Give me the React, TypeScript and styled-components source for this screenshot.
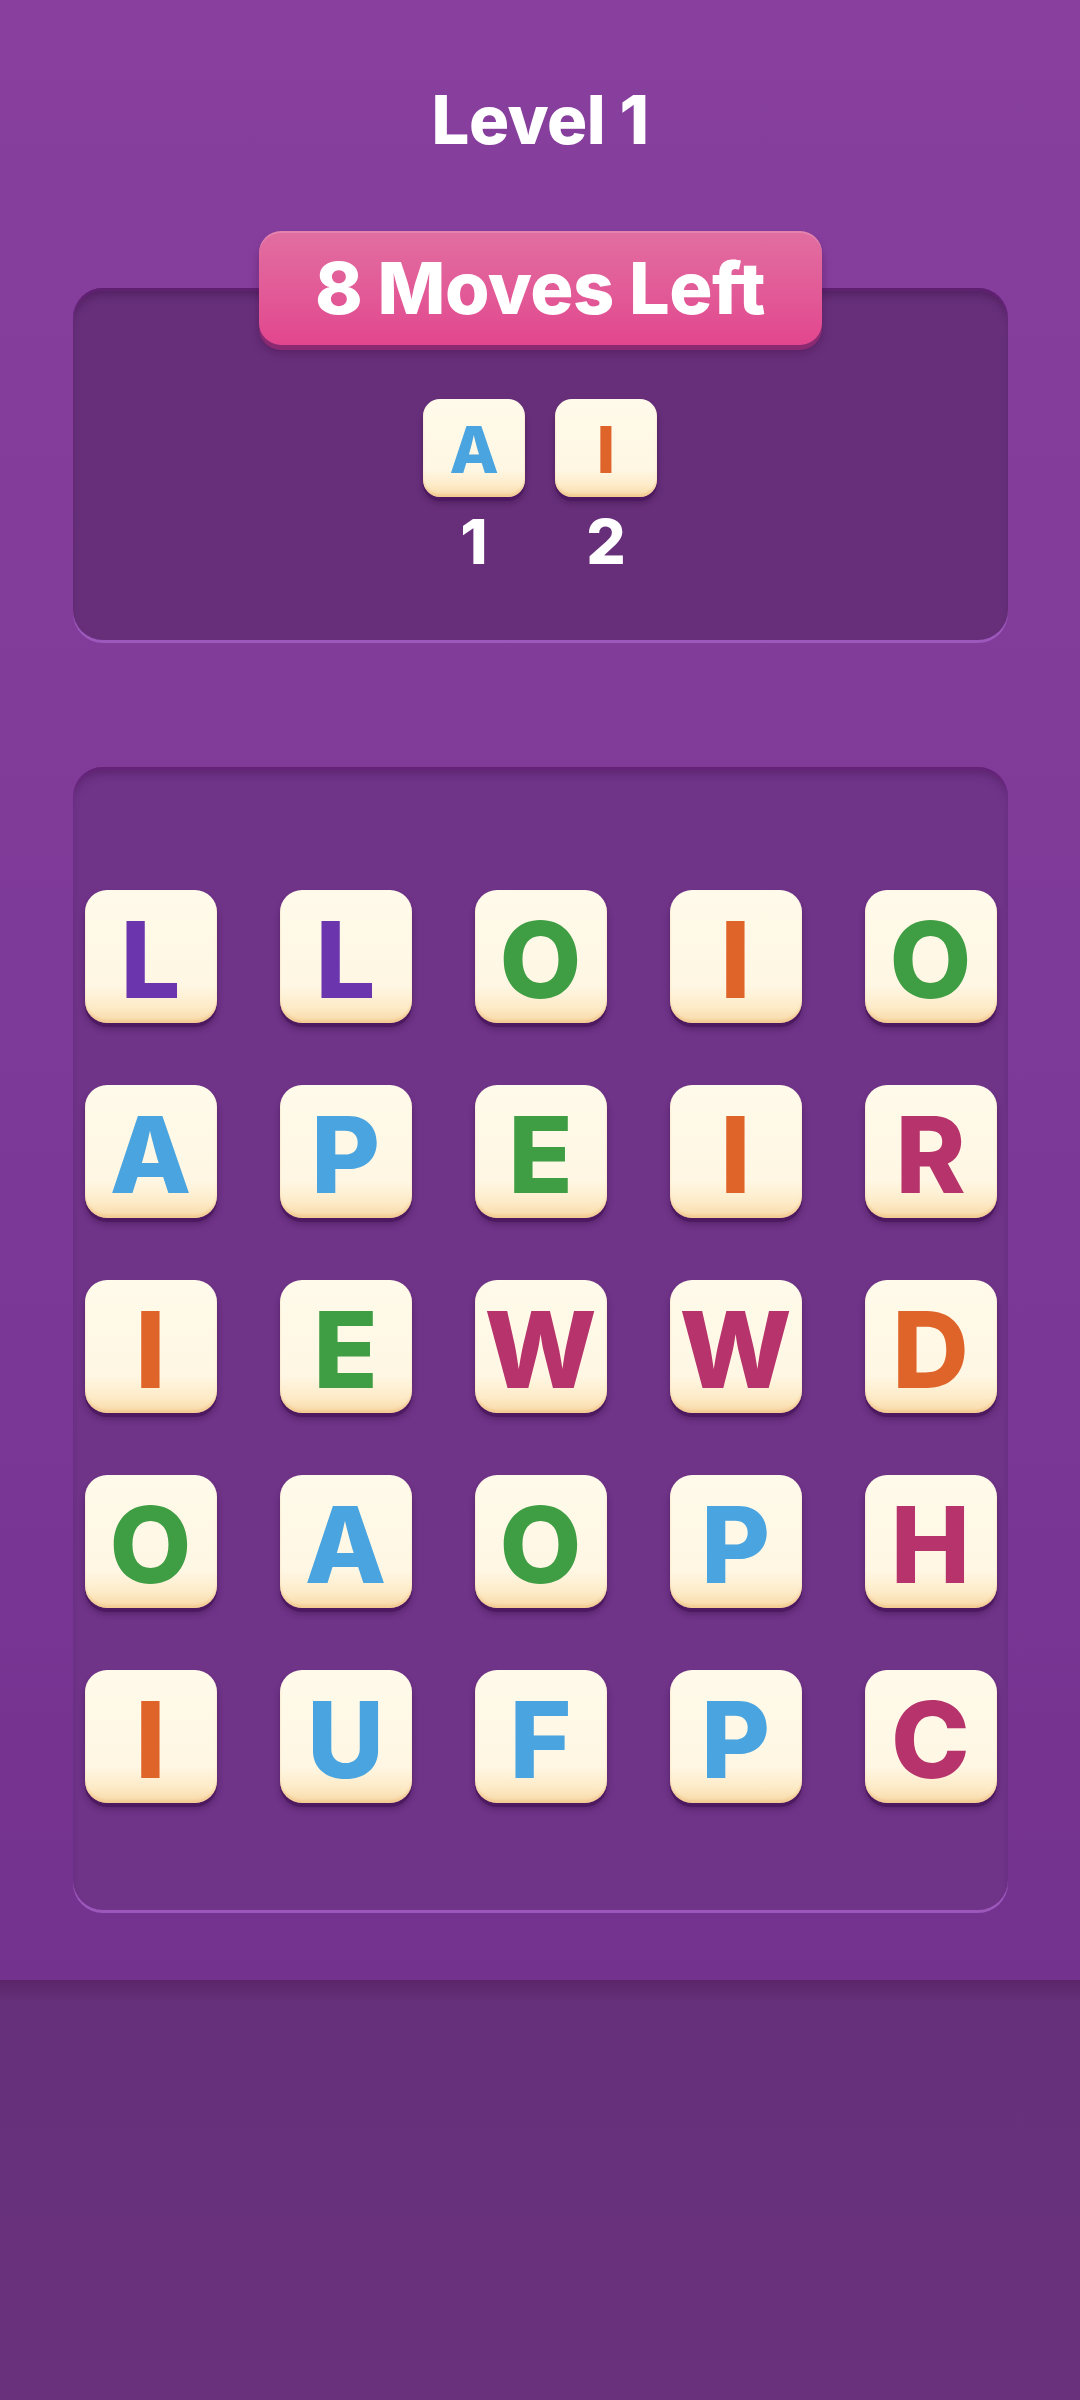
import React from 'react'
import styled, { createGlobalStyle } from 'styled-components'

const GlobalStyle = createGlobalStyle`
  html, body {
    margin: 0;
    padding: 0;
    background: #69317c;
  }
  * {
    box-sizing: border-box;
  }
`

const colors = {
  purple: '#6b35ae',
  green: '#3f9d44',
  orange: '#df6429',
  blue: '#4aa4df',
  pink: '#b7336b',
}

type LetterColor = keyof typeof colors

const Screen = styled.div`
  width: 1080px;
  height: 2400px;
  display: flex;
  flex-direction: column;
  font-family: 'Inter', 'Lato', sans-serif;
  font-weight: 800;
  overflow: hidden;
`

const Stage = styled.main`
  height: 1980px;
  flex-shrink: 0;
  display: flex;
  flex-direction: column;
  align-items: center;
  background: linear-gradient(180deg, #883f9d 0%, #7e3a98 50%, #74328f 100%);
`

const Title = styled.h1`
  margin: 80px 0 0;
  height: 80px;
  font-size: 67px;
  line-height: 80px;
  font-weight: 800;
  color: #fff;
  letter-spacing: -0.5px;
`

const GoalArea = styled.section`
  margin-top: 71px;
  width: 935px;
  display: flex;
  flex-direction: column;
  align-items: center;
`

const Badge = styled.div`
  position: relative;
  z-index: 1;
  width: 563px;
  height: 114px;
  margin-bottom: -57px;
  border-radius: 22px;
  display: flex;
  align-items: center;
  justify-content: center;
  background: linear-gradient(180deg, #e16ea0 0%, #e25a97 55%, #e2468e 100%);
  box-shadow: 0 5px 0 #8b2a72, 0 8px 8px rgba(60, 10, 60, 0.35),
    inset 0 2px 0 rgba(255, 255, 255, 0.15);
`

const BadgeText = styled.span`
  font-size: 72px;
  line-height: 1;
  color: #fff;
  letter-spacing: -0.5px;
`

const GoalPanel = styled.div`
  width: 100%;
  height: 352px;
  border-radius: 30px;
  background: #672f7a;
  padding-top: 111px;
  display: flex;
  justify-content: center;
  gap: 30px;
  box-shadow: inset 0 10px 10px -4px rgba(50, 10, 60, 0.45),
    inset 0 3px 0 #7b2e92, 0 3px 0 #9c58bb;
`

const Slot = styled.div`
  display: flex;
  flex-direction: column;
  align-items: center;
`

const Tile = styled.div<{ $color: LetterColor; $size: number; $height: number; $font: number }>`
  width: ${p => p.$size}px;
  height: ${p => p.$height}px;
  border-radius: ${p => Math.round(p.$size * 0.17)}px;
  display: flex;
  align-items: center;
  justify-content: center;
  padding-top: ${p => Math.round(p.$font * 0.06)}px;
  background: linear-gradient(180deg, #fffaea 0%, #fff7e4 72%, #fdebc8 88%, #f8d9a6 100%);
  box-shadow: 0 4px 0 #4d1a61, 0 6px 6px rgba(40, 5, 50, 0.35),
    inset 0 -3px 2px rgba(240, 190, 130, 0.5);
  color: ${p => colors[p.$color]};
  font-size: ${p => p.$font}px;
  line-height: 1;
  font-weight: 800;
`

const SlotNum = styled.span`
  margin-top: 14px;
  font-size: 62px;
  line-height: 62px;
  color: #fff;
`

const Board = styled.section`
  margin-top: 127px;
  width: 935px;
  height: 1143px;
  border-radius: 30px;
  background: #6f3388;
  padding: 123px 12px 0;
  box-shadow: inset 0 10px 10px -4px rgba(50, 10, 60, 0.35),
    inset 0 3px 0 #7a2f91, 0 3px 0 #9b58ba;
`

const Grid = styled.div`
  display: grid;
  grid-template-columns: repeat(5, 132px);
  grid-auto-rows: 133px;
  column-gap: 63px;
  row-gap: 62px;
`

const Footer = styled.footer`
  flex: 1;
  background: linear-gradient(180deg, #5a2569 0px, #67307a 22px, #69317c 100%);
`

const goal: { letter: string; color: LetterColor }[] = [
  { letter: 'A', color: 'blue' },
  { letter: 'I', color: 'orange' },
]

const rows: [string, LetterColor][][] = [
  [['L', 'purple'], ['L', 'purple'], ['O', 'green'], ['I', 'orange'], ['O', 'green']],
  [['A', 'blue'], ['P', 'blue'], ['E', 'green'], ['I', 'orange'], ['R', 'pink']],
  [['I', 'orange'], ['E', 'green'], ['W', 'pink'], ['W', 'pink'], ['D', 'orange']],
  [['O', 'green'], ['A', 'blue'], ['O', 'green'], ['P', 'blue'], ['H', 'pink']],
  [['I', 'orange'], ['U', 'blue'], ['F', 'blue'], ['P', 'blue'], ['C', 'pink']],
]

const App: React.FC = () => {
  return (
    <Screen>
      <GlobalStyle />
      <Stage>
        <Title>Level 1</Title>
        <GoalArea>
          <Badge>
            <BadgeText>8 Moves Left</BadgeText>
          </Badge>
          <GoalPanel>
            {goal.map((g, i) => (
              <Slot key={i}>
                <Tile $color={g.color} $size={102} $height={98} $font={64}>
                  {g.letter}
                </Tile>
                <SlotNum>{i + 1}</SlotNum>
              </Slot>
            ))}
          </GoalPanel>
        </GoalArea>
        <Board>
          <Grid>
            {rows.flat().map(([letter, color], i) => (
              <Tile key={i} $color={color} $size={132} $height={133} $font={106}>
                {letter}
              </Tile>
            ))}
          </Grid>
        </Board>
      </Stage>
      <Footer />
    </Screen>
  )
}

export default App
